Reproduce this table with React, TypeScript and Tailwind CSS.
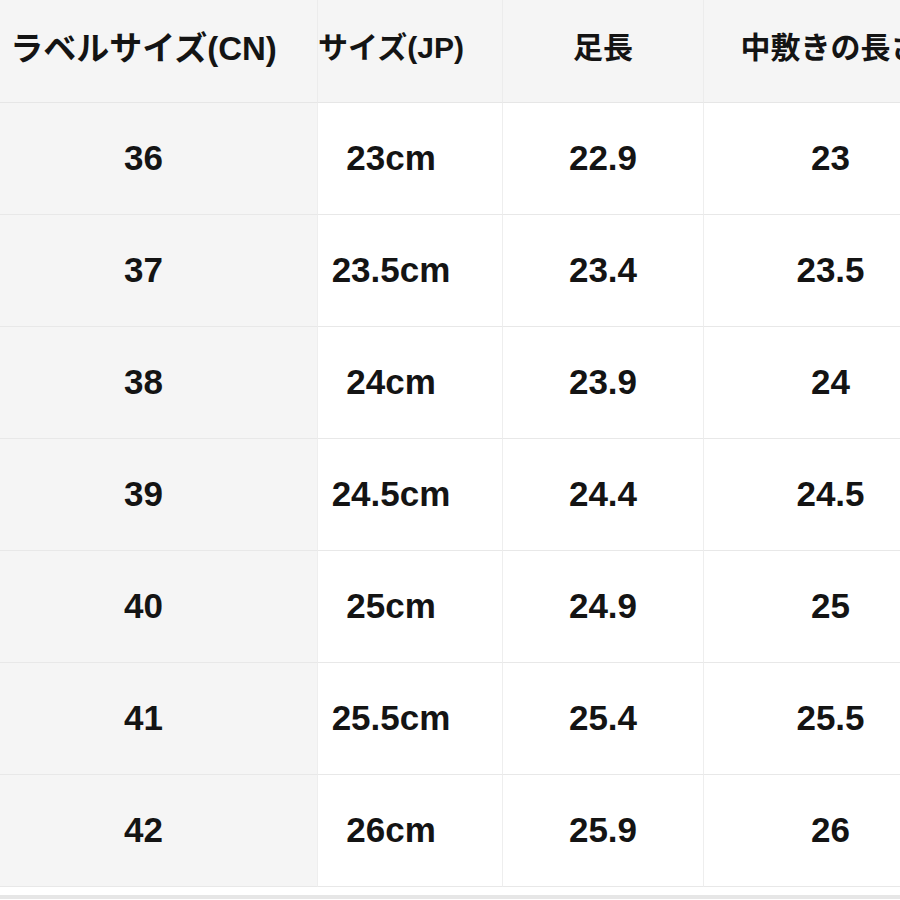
import React from "react";

const rows = [
  ["36", "23cm", "22.9", "23"],
  ["37", "23.5cm", "23.4", "23.5"],
  ["38", "24cm", "23.9", "24"],
  ["39", "24.5cm", "24.4", "24.5"],
  ["40", "25cm", "24.9", "25"],
  ["41", "25.5cm", "25.4", "25.5"],
  ["42", "26cm", "25.9", "26"],
];

const headers = ["ラベルサイズ(CN)", "サイズ(JP)", "足長", "中敷きの長さ"];

const cellPad = ["pr-[30px]", "pr-[38px]", "pl-0", "pr-0"];
const headSize = ["text-[33px]", "text-[30px]", "text-[30px]", "text-[30px]"];

export default function App() {
  return (
    <div
      className="w-[900px] h-[900px] overflow-hidden bg-white text-[#141414]"
      style={{ fontFamily: '"Liberation Sans", "Noto Sans CJK JP", sans-serif' }}
    >
      <div className="grid grid-cols-[317px_185px_201px_254px] w-[957px]">
        {headers.map((h, i) => (
          <div
            key={h}
            className={`h-[103px] bg-[#f5f5f5] border-b border-[#e6e6e6] ${i > 0 ? "border-l border-l-[#ececec]" : ""} flex items-center justify-center pb-[6px] ${cellPad[i]}`}
          >
            <span className={`${headSize[i]} font-bold whitespace-nowrap leading-none`}>{h}</span>
          </div>
        ))}
        {rows.map((r, ri) =>
          r.map((c, ci) => (
            <div
              key={`${ri}-${ci}`}
              className={`h-[112px] ${ci === 0 ? "bg-[#f5f5f5]" : "bg-white"} border-b border-[#e8e8e8] ${ci > 0 ? "border-l border-l-[#eeeeee]" : ""} flex items-center justify-center pb-[2px] ${cellPad[ci]}`}
            >
              <span className="text-[35px] font-bold leading-none whitespace-nowrap">{c}</span>
            </div>
          ))
        )}
      </div>
      <div className="h-[8px] bg-white" />
      <div className="h-[4px] bg-[#e6e6e6]" />
    </div>
  );
}
